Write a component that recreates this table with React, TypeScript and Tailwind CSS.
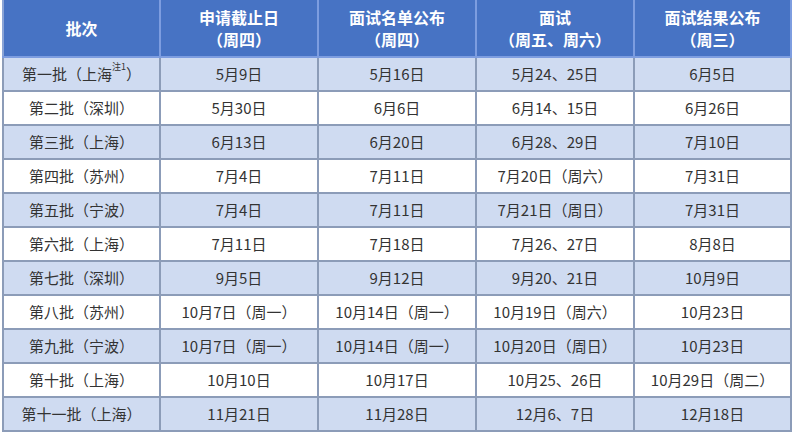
const header: string[][] = [
  ["批次"],
  ["申请截止日", "（周四）"],
  ["面试名单公布", "（周四）"],
  ["面试", "（周五、周六）"],
  ["面试结果公布", "（周三）"],
];

const rows: string[][] = [
  ["第一批（上海注1）", "5月9日", "5月16日", "5月24、25日", "6月5日"],
  ["第二批（深圳）", "5月30日", "6月6日", "6月14、15日", "6月26日"],
  ["第三批（上海）", "6月13日", "6月20日", "6月28、29日", "7月10日"],
  ["第四批（苏州）", "7月4日", "7月11日", "7月20日（周六）", "7月31日"],
  ["第五批（宁波）", "7月4日", "7月11日", "7月21日（周日）", "7月31日"],
  ["第六批（上海）", "7月11日", "7月18日", "7月26、27日", "8月8日"],
  ["第七批（深圳）", "9月5日", "9月12日", "9月20、21日", "10月9日"],
  ["第八批（苏州）", "10月7日（周一）", "10月14日（周一）", "10月19日（周六）", "10月23日"],
  ["第九批（宁波）", "10月7日（周一）", "10月14日（周一）", "10月20日（周日）", "10月23日"],
  ["第十批（上海）", "10月10日", "10月17日", "10月25、26日", "10月29日（周二）"],
  ["第十一批（上海）", "11月21日", "11月28日", "12月6、7日", "12月18日"],
];

const widths = ["w-[157px]", "w-[158px]", "w-[158px]", "w-[158px]", "w-[157px]"];

function Cell({ text }: { text: string }) {
  // footnote mark on the first batch
  if (text.includes("注1")) {
    const [before, after] = text.split("注1");
    return (
      <>
        {before}
        <sup className="text-[9px] align-super">注1</sup>
        {after}
      </>
    );
  }
  return <>{text}</>;
}

export default function App() {
  return (
    <div
      className="w-[795px] h-[432px] bg-white overflow-hidden pl-[2px]"
      style={{ fontFamily: '"Noto Sans CJK SC", "Noto Sans", sans-serif' }}
    >
      <table className="table-fixed border-collapse w-[790px]">
        <thead>
          <tr className="bg-[#4773c4] h-[57px]">
            {header.map((h, i) => (
              <th
                key={i}
                className={`${widths[i]} border-x-2 border-b-2 border-[#7d9de0] border-l-[#8aa4d6] text-white font-bold text-[16px] leading-[22px] text-center align-middle p-0`}
              >
                {h.map((line, j) => (
                  <div key={j}>{line}</div>
                ))}
              </th>
            ))}
          </tr>
        </thead>
        <tbody>
          {rows.map((r, i) => (
            <tr
              key={i}
              className={`h-[34px] ${i % 2 === 0 ? "bg-[#cfdbf1]" : "bg-white"}`}
            >
              {r.map((c, j) => (
                <td
                  key={j}
                  className="border-2 border-[#8c9cb8] text-center align-middle text-[15px] leading-[18px] text-[#333333] p-0 whitespace-nowrap"
                >
                  <Cell text={c} />
                </td>
              ))}
            </tr>
          ))}
        </tbody>
      </table>
    </div>
  );
}
